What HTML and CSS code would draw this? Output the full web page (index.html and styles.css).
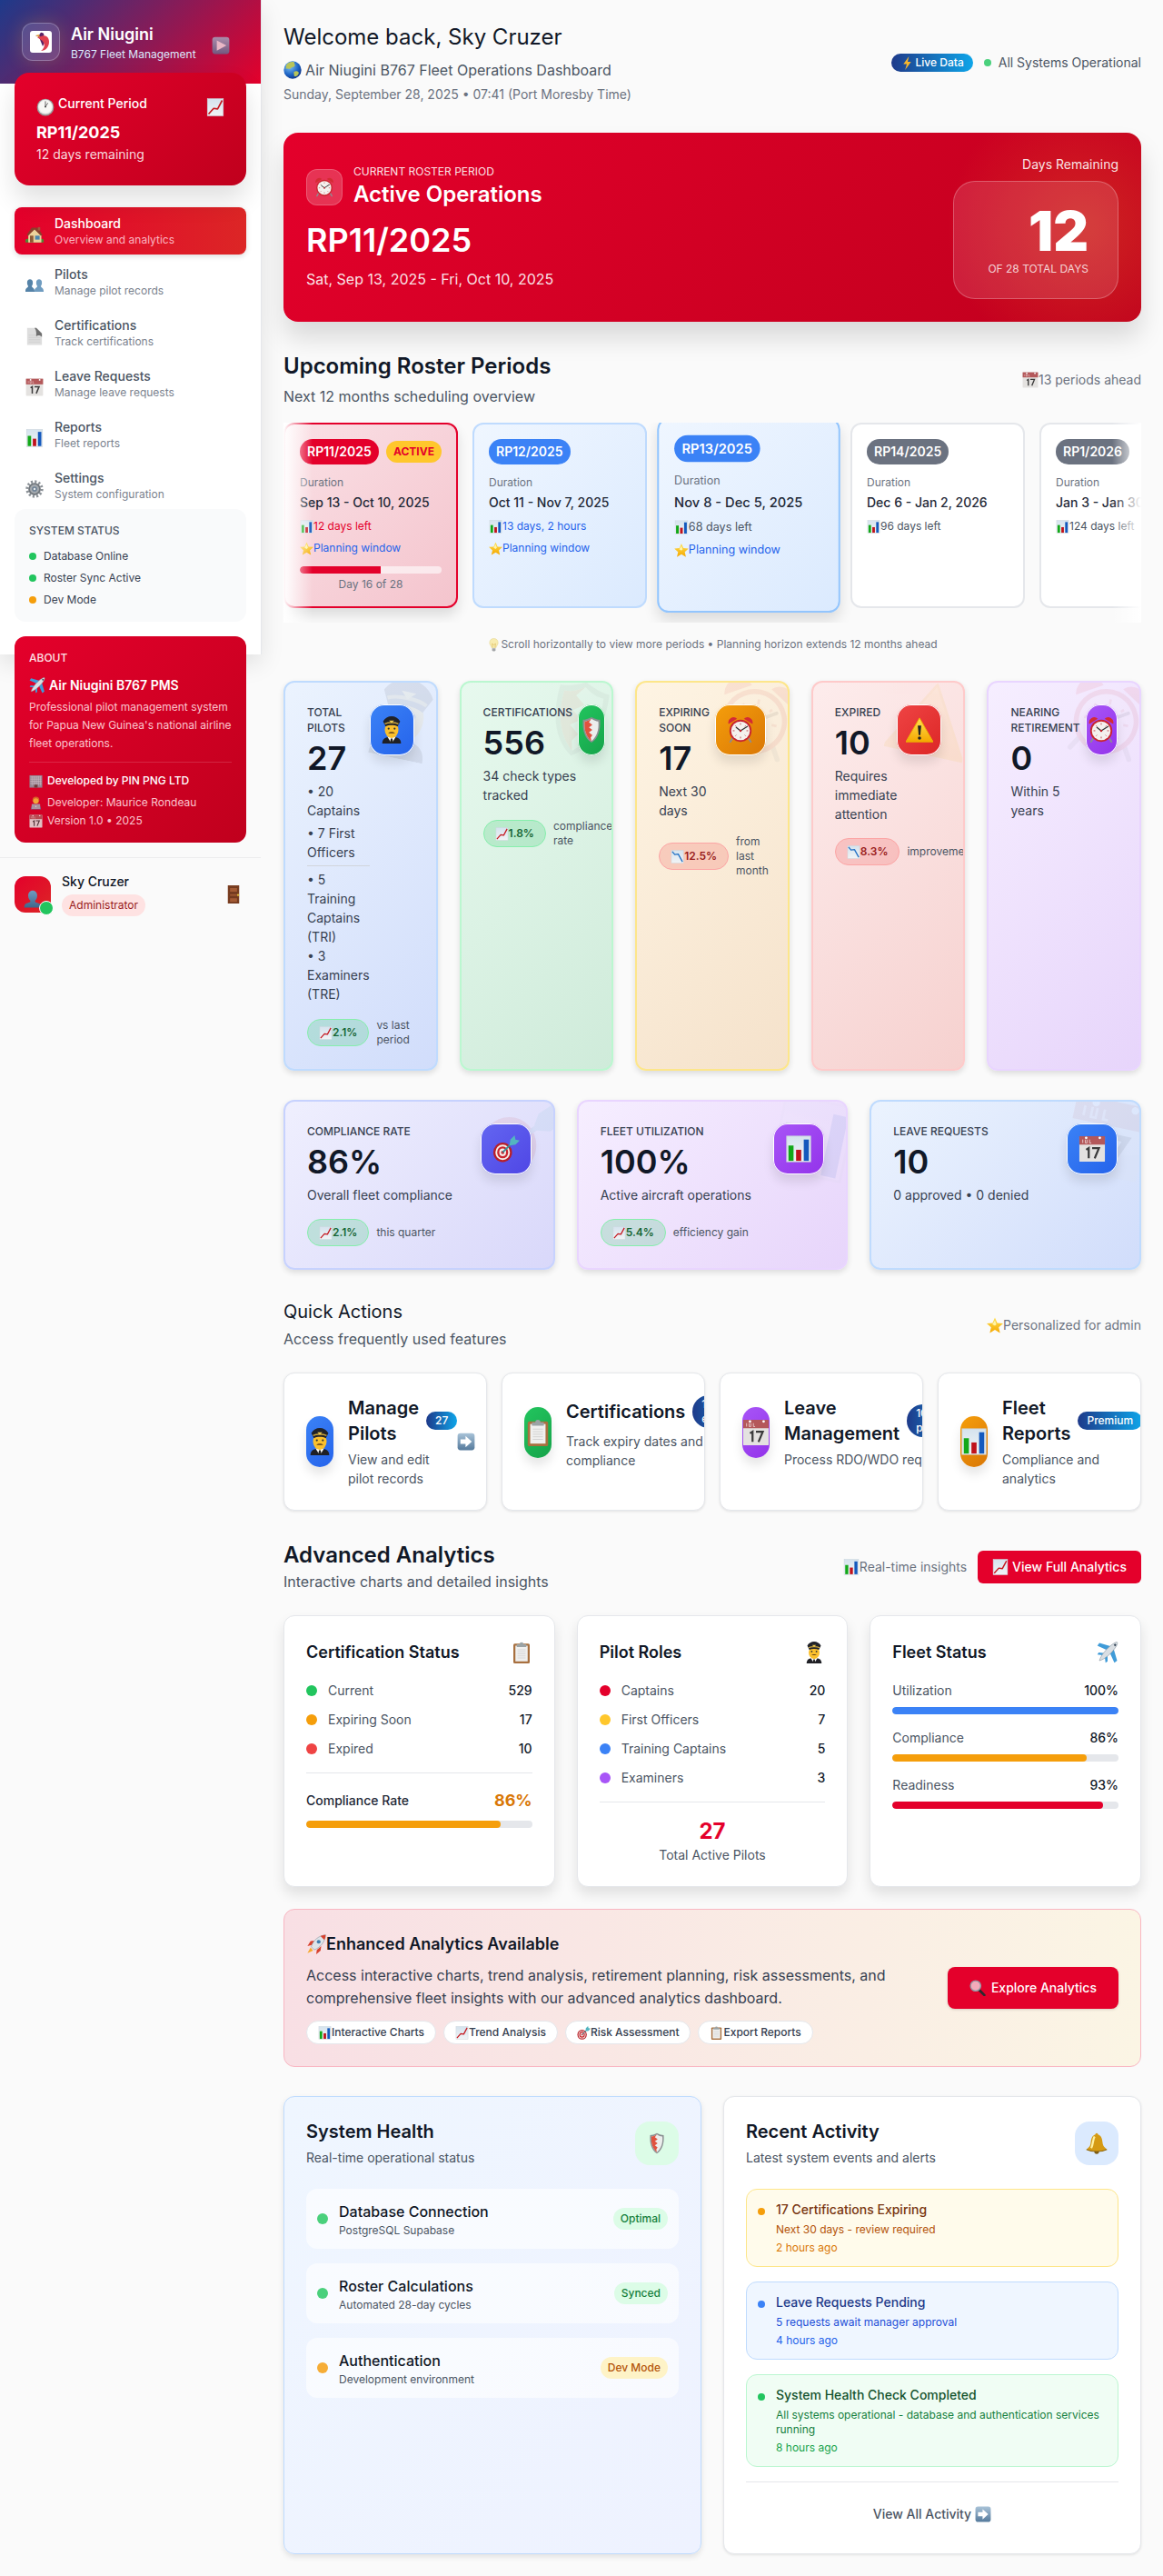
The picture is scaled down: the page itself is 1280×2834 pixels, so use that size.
FILE: index.html
```html
<!DOCTYPE html>
<html lang="en">
<head>
<meta charset="utf-8">
<meta name="viewport" content="width=device-width, initial-scale=1">
<title>Air Niugini B767 Fleet Management</title>
<link rel="stylesheet" href="styles.css">
</head>
<body>
<svg class="sprite" aria-hidden="true">
  <defs>
    <linearGradient id="g-steel" x1="0" y1="0" x2="0" y2="1"><stop offset="0" stop-color="#a9c3d8"/><stop offset="1" stop-color="#557a9c"/></linearGradient>
    <linearGradient id="g-person" x1="0" y1="0" x2="0" y2="1"><stop offset="0" stop-color="#6f9cc0"/><stop offset="1" stop-color="#3f678c"/></linearGradient>
    <linearGradient id="g-paper" x1="0" y1="0" x2="0" y2="1"><stop offset="0" stop-color="#d5e3ee"/><stop offset="1" stop-color="#f1f4f6"/></linearGradient>
    <linearGradient id="g-gold" x1="0" y1="0" x2="0" y2="1"><stop offset="0" stop-color="#ffe052"/><stop offset="1" stop-color="#f5a800"/></linearGradient>
    <radialGradient id="g-globe" cx=".35" cy=".3" r=".8"><stop offset="0" stop-color="#7fc4f5"/><stop offset=".6" stop-color="#1c62c4"/><stop offset="1" stop-color="#0b2a78"/></radialGradient>
  </defs>
  <symbol id="i-clock" viewBox="0 0 32 32"><circle cx="16" cy="16" r="15" fill="#9a9a9a"/><circle cx="16" cy="15.500" r="13" fill="#e9e9e7"/><circle cx="16" cy="15" r="11" fill="#f8f8f5"/><path d="M16 15V6M16 15l4-6" stroke="#666" stroke-width="1.600" stroke-linecap="round"/><circle cx="16" cy="15" r="1.500" fill="#444"/></symbol>
  <symbol id="i-alarm" viewBox="0 0 32 32"><path d="M7 25l-3 5M25 25l3 5" stroke="#8c8c94" stroke-width="2" stroke-linecap="round"/><path d="M2 9a6 6 0 0 1 10-6zM30 9a6 6 0 0 0-10-6z" fill="#d42b34"/><circle cx="16" cy="17" r="13" fill="#c8252f"/><circle cx="16" cy="17" r="11" fill="#f4f1ee"/><path d="M16 8v2M16 24v2M7 17h2M23 17h2M10 11l1 1M22 11l-1 1M10 23l1-1M22 23l-1-1" stroke="#c24a50" stroke-width="1"/><path d="M16 17l8-5M16 17l-5-4" stroke="#333" stroke-width="1.400" stroke-linecap="round"/><circle cx="16" cy="17" r="1.300" fill="#c8252f"/></symbol>
  <symbol id="i-play" viewBox="0 0 32 32"><rect x="1" y="1" width="30" height="30" rx="5" fill="url(#g-steel)"/><path d="M9 7l17 9-17 9z" fill="#fff"/></symbol>
  <symbol id="i-arrow" viewBox="0 0 32 32"><rect x="1" y="1" width="30" height="30" rx="5" fill="url(#g-steel)"/><path d="M6 12h9V6l11 10-11 10v-6H6z" fill="#fff"/></symbol>
  <symbol id="i-up" viewBox="0 0 32 32"><rect x="2" y="1" width="28" height="30" fill="url(#g-paper)" stroke="#cbd5dc"/><path d="M4 28l9-10 7 1 8-15" fill="none" stroke="#c5161d" stroke-width="2.600" stroke-linejoin="round"/></symbol>
  <symbol id="i-down" viewBox="0 0 32 32"><rect x="2" y="1" width="28" height="30" fill="url(#g-paper)" stroke="#cbd5dc"/><path d="M4 4l6 7 8-1 10 18" fill="none" stroke="#2270c4" stroke-width="2.800" stroke-linejoin="round"/></symbol>
  <symbol id="i-bars" viewBox="0 0 32 32"><rect x="2" y="1" width="28" height="30" fill="url(#g-paper)" stroke="#cbd5dc"/><rect x="4" y="12" width="6" height="18" fill="#12a818"/><rect x="13" y="17" width="6" height="13" fill="#c0121c"/><rect x="22" y="5" width="6" height="25" fill="#1459bd"/></symbol>
  <symbol id="i-cal" viewBox="0 0 32 32"><rect x="1" y="1" width="30" height="30" rx="1" fill="#e4e2e0"/><path d="M1 1h30v10H1z" fill="#b4585a"/><path d="M5 9V5M8 5v4h2V5M13 5v4h2" stroke="#e8c8c8" fill="none"/><circle cx="9" cy="3" r="1.500" fill="#fff"/><circle cx="25" cy="3" r="1.500" fill="#fff"/><path d="M9 17l3-2v12M16 15h8l-5 12" stroke="#3b3b3b" stroke-width="2.400" fill="none"/></symbol>
  <symbol id="i-house" viewBox="0 0 32 32"><path d="M0 25c3-3 29-3 32 0v5H0z" fill="#4d8a35"/><path d="M5 15L16 5l12 10v15H5z" fill="#ecd39b"/><path d="M2 17L11 4h11l8 13-3 1-11-11L5 18z" fill="#8a3f2c"/><rect x="8" y="18" width="6" height="12" fill="#8d5a35"/><rect x="17" y="18" width="8" height="7" fill="#4b86ad"/><rect x="22" y="3" width="4" height="6" fill="#a2563e"/></symbol>
  <symbol id="i-people" viewBox="0 0 32 32"><path d="M24 5c3 0 5 2 5 6 0 3-1 5-2 6 0 3 5 2 5 9v1H16v-1c0-7 5-6 5-9-1-1-2-3-2-6 0-4 2-6 5-6z" fill="#6f9cc0"/><path d="M8 5c3 0 5 2 5 6 0 3-1 5-2 6 0 3 5 2 5 9v1H0v-1c0-7 5-6 5-9-1-1-2-3-2-6 0-4 2-6 5-6z" fill="#5583a8"/></symbol>
  <symbol id="i-page" viewBox="0 0 32 32"><path d="M3 1h17l9 9v21H3z" fill="#dedede"/><path d="M6 14h16M6 18h20M6 22h20M6 26h20" stroke="#cacaca"/><path d="M19 1l10 10v6c-3-4-8-3-10-1 0-5 1-10-3-15z" fill="#6f6f6f"/></symbol>
  <symbol id="i-gear" viewBox="0 0 32 32"><circle cx="16" cy="16" r="13" fill="none" stroke="#8b9197" stroke-width="5" stroke-dasharray="3.400 3.400"/><circle cx="16" cy="16" r="9.500" fill="#a6abb0" stroke="#70767c" stroke-width="3"/><circle cx="16" cy="16" r="4.500" fill="#6c8094"/><circle cx="16" cy="16" r="2" fill="#e4e7ea"/></symbol>
  <symbol id="i-plane" viewBox="0 0 32 32"><path d="M14 12L1 6l3-4 17 5zM20 18l6 13 4-3-5-17z" fill="#3f9bd8"/><path d="M9 20l-8-1 2-3 9 1zM12 23l1 8 3-2 0-9z" fill="#3f9bd8"/><path d="M4 28c2-8 11-18 19-24 3-2 6-4 7-3s0 4-2 7C22 17 12 26 4 28z" fill="#d9dee3" stroke="#8794a0" stroke-width=".8"/><path d="M27 3l2 2-2 2-2-2z" fill="#345"/></symbol>
  <symbol id="i-building" viewBox="0 0 32 32"><rect x="1" y="2" width="30" height="29" fill="#8d9da6"/><path d="M3 6h26M3 11h26M3 16h26M3 21h26M7 4v22M12 4v22M17 4v22M22 4v22M27 4v22" stroke="#c8d6dc" stroke-width="1.500"/><rect x="12" y="24" width="8" height="7" fill="#5a4540"/></symbol>
  <symbol id="i-dev" viewBox="0 0 32 32"><circle cx="16" cy="9" r="8" fill="#d8722a"/><circle cx="16" cy="11" r="6" fill="#f9c23c"/><path d="M4 31c0-9 5-12 12-12s12 3 12 12z" fill="#6a6f9a"/><rect x="6" y="18" width="20" height="12" rx="1" fill="#a5abb3"/><circle cx="16" cy="24" r="1.500" fill="#e7eaee"/></symbol>
  <symbol id="i-bust" viewBox="0 0 32 32"><path d="M16 1c5 0 8 4 8 9s-2 7-4 9c0 3 2 3 5 4 4 1 6 3 6 8H1c0-5 2-7 6-8 3-1 5-1 5-4-2-2-4-4-4-9s3-9 8-9z" fill="url(#g-person)"/></symbol>
  <symbol id="i-door" viewBox="0 0 32 32"><rect x="6" y="0" width="20" height="32" fill="#7b3f22"/><path d="M9 4h14v8H9zM9 15h14v4H9zM9 22h14v8H9z" fill="#a35a34" stroke="#62301a"/><circle cx="24" cy="17" r="1.800" fill="#e7c33c"/></symbol>
  <symbol id="i-globe" viewBox="0 0 32 32"><circle cx="16" cy="16" r="15.500" fill="url(#g-globe)"/><path d="M5 7c4-5 9-6 14-5-1 3 3 5 0 8-3 2-4 0-6 3-3 2-7 0-9 1zM18 20c3-3 8-2 9 1-1 5-6 7-8 6z" fill="#b8c45a"/></symbol>
  <symbol id="i-zap" viewBox="0 0 32 32"><path d="M20 0L7 18h8L11 32l14-19h-8z" fill="#f7b52c"/></symbol>
  <symbol id="i-star" viewBox="0 0 32 32"><path d="M16 1l4.500 10.500L32 12.500l-8.500 7.500L26 31l-10-6-10 6 2.500-11L0 12.500l11.500-1z" fill="url(#g-gold)"/><path d="M16 6l3 8-3 3-5-3z" fill="#fff4a8"/></symbol>
  <symbol id="i-bulb" viewBox="0 0 32 32"><path d="M16 1c6 0 10 4 10 10 0 5-4 7-5 12H11c-1-5-5-7-5-12C6 5 10 1 16 1z" fill="#f8ecb0" stroke="#e2cf82"/><path d="M13 22l-1-9 4 3 4-3-1 9" fill="none" stroke="#d3a73a"/><path d="M12 24h8v5l-2 2h-4l-2-2z" fill="#a3a6a8"/></symbol>
  <symbol id="i-pilot" viewBox="0 0 32 32"><path d="M5 32c0-6 4-8 11-8s11 2 11 8z" fill="#1f2026"/><path d="M11 24h10l-5 8z" fill="#fff"/><path d="M15 26h2l1 6h-4z" fill="#222"/><ellipse cx="16" cy="16" rx="8" ry="9.500" fill="#fbc02d"/><path d="M12 20c2-2 6-2 8 0z" fill="#5b3a1a"/><circle cx="12.500" cy="14.500" r="1.200" fill="#333"/><circle cx="19.500" cy="14.500" r="1.200" fill="#333"/><path d="M6 6c2-4 6-6 10-6s8 2 10 6l-3 6c-4-2-10-2-14 0z" fill="#202229"/><path d="M8 9c4-2 12-2 16 0" stroke="#c9a43a" stroke-width="1.500" fill="none"/><path d="M13 5h6l-3 3z" fill="#f0cb52"/></symbol>
  <symbol id="i-shield" viewBox="0 0 32 32"><path d="M16 1c4 2 7 3 10 3 1 12-2 22-10 27C8 26 5 16 6 4c3 0 6-1 10-3z" fill="#8b9092"/><path d="M16 3c3 2 5 3 8 3 1 10-2 18-8 23C10 24 7 16 8 6c3 0 5-1 8-3z" fill="#eceeed"/><path d="M16 3l-3 4 4 3-4 3 4 3-4 3 4 3-2 3 1 4C10 24 7 16 8 6c3 0 5-1 8-3z" fill="#e0523f"/></symbol>
  <symbol id="i-warn" viewBox="0 0 32 32"><path d="M16 2l16 28H0z" fill="url(#g-gold)" stroke="#eeb400" stroke-linejoin="round"/><path d="M14 11h4l-1 11h-2z" fill="#222"/><circle cx="16" cy="25.500" r="1.900" fill="#222"/></symbol>
  <symbol id="i-dart" viewBox="0 0 32 32"><ellipse cx="12" cy="20" rx="11" ry="11.500" fill="#b81f28"/><ellipse cx="12" cy="20" rx="8.500" ry="9" fill="#f4eeea"/><ellipse cx="12" cy="20" rx="6.500" ry="7" fill="#c9252e"/><ellipse cx="12" cy="20" rx="4" ry="4.500" fill="#f4eeea"/><circle cx="12" cy="20" r="2" fill="#c9252e"/><path d="M12 20L26 6" stroke="#3c8f98" stroke-width="2"/><path d="M20 12l1-7 5-5 1 5 5 1-5 5z" fill="#53b5c0"/></symbol>
  <symbol id="i-clip" viewBox="0 0 32 32"><rect x="4" y="3" width="24" height="29" rx="2" fill="#a8703f"/><rect x="7" y="6" width="18" height="23" fill="#f0f0ef"/><path d="M10 12h12M10 15h12M10 18h12M10 21h12M10 24h12" stroke="#d0d0d0"/><path d="M9 4h4a3 3 0 0 1 6 0h4v4H9z" fill="#9ba3a5"/></symbol>
  <symbol id="i-rocket" viewBox="0 0 32 32"><path d="M9 17l-7 2 5-8 6-1zM17 25l-1 7 7-6 1-7z" fill="#d9412e"/><path d="M7 21l-5 9 9-4z" fill="#f7a92e"/><path d="M8 20C11 10 20 2 31 1c0 10-8 20-18 24z" fill="#dfe4e8" stroke="#7f8b96" stroke-width=".8"/><path d="M31 1c0 3-1 6-2 8l-6-6c2-1 5-2 8-2z" fill="#d9412e"/><circle cx="20" cy="12" r="3" fill="#3f7eae"/></symbol>
  <symbol id="i-mag" viewBox="0 0 32 32"><path d="M19 20l10 10" stroke="#2a2a2e" stroke-width="5" stroke-linecap="round"/><circle cx="12" cy="12" r="10" fill="#f3a9b9" stroke="#8f9aa5" stroke-width="2.500"/></symbol>
  <symbol id="i-bell" viewBox="0 0 32 32"><circle cx="16" cy="28" r="3.500" fill="#7b5a14"/><path d="M14 3a2 2 0 0 1 4 0c6 2 6 8 7 14 1 4 3 5 6 8-8 4-22 4-30 0 3-3 5-4 6-8 1-6 1-12 7-14z" fill="#d59a14"/><path d="M13 6c-3 4-2 12-5 17" stroke="#fff1a0" stroke-width="3" fill="none"/><path d="M1 25c8 4 22 4 30 0" stroke="#8f6810" stroke-width="1.500" fill="none"/></symbol>
</svg>

<div class="app">
  <aside class="sidebar">
    <header class="brand">
      <div class="brand-logo">
        <svg viewBox="0 0 24 24" width="24" height="24" aria-hidden="true"><rect width="24" height="24" rx="3" fill="#fff"/><path d="M6 5l4 0c1-2 2-4 3-3 2 0 3 2 2 4l2 3c-1 2-1 5-3 8l-2-5c-1-3-2-6-6-7z" fill="#5a2166"/><path d="M12 6c5-2 9 1 9 6 0 6-4 10-9 10 3-2 5-6 3-9-1-3-5-4-7-6z" fill="#df3f4f"/><path d="M6 5l4-1 1 3z" fill="#e8a33a"/></svg>
      </div>
      <div class="brand-text">
        <h2>Air Niugini</h2>
        <p>B767 Fleet Management</p>
      </div>
      <button class="brand-toggle" aria-label="Collapse sidebar"><svg class="e20"><use href="#i-play"/></svg></button>
    </header>

    <section class="period">
      <div class="period-head"><svg class="e20"><use href="#i-clock"/></svg><span>Current Period</span><svg class="e20 last"><use href="#i-up"/></svg></div>
      <strong>RP11/2025</strong>
      <p>12 days remaining</p>
    </section>

    <nav class="nav">
      <a class="active" href="#"><svg class="e20"><use href="#i-house"/></svg><span><b>Dashboard</b><small>Overview and analytics</small></span></a>
      <a href="#"><svg class="e20"><use href="#i-people"/></svg><span><b>Pilots</b><small>Manage pilot records</small></span></a>
      <a href="#"><svg class="e20"><use href="#i-page"/></svg><span><b>Certifications</b><small>Track certifications</small></span></a>
      <a href="#"><svg class="e20"><use href="#i-cal"/></svg><span><b>Leave Requests</b><small>Manage leave requests</small></span></a>
      <a href="#"><svg class="e20"><use href="#i-bars"/></svg><span><b>Reports</b><small>Fleet reports</small></span></a>
      <a href="#"><svg class="e20"><use href="#i-gear"/></svg><span><b>Settings</b><small>System configuration</small></span></a>
    </nav>

    <section class="status">
      <h3>SYSTEM STATUS</h3>
      <ul>
        <li><i class="dot green"></i>Database Online</li>
        <li><i class="dot green"></i>Roster Sync Active</li>
        <li><i class="dot amber"></i>Dev Mode</li>
      </ul>
    </section>

    <section class="about">
      <h3>ABOUT</h3>
      <h4><svg class="e18"><use href="#i-plane"/></svg>Air Niugini B767 PMS</h4>
      <p>Professional pilot management system for Papua New Guinea's national airline fleet operations.</p>
      <div class="credits">
        <span class="strong"><svg class="e15"><use href="#i-building"/></svg>Developed by PIN PNG LTD</span>
        <span><svg class="e15"><use href="#i-dev"/></svg>Developer: Maurice Rondeau</span>
        <span><svg class="e15"><use href="#i-cal"/></svg>Version 1.0 • 2025</span>
      </div>
    </section>

    <footer class="user">
      <div class="avatar"><svg class="e20"><use href="#i-bust"/></svg></div>
      <div class="user-text"><b>Sky Cruzer</b><span>Administrator</span></div>
      <button aria-label="Sign out"><svg class="e20"><use href="#i-door"/></svg></button>
    </footer>
  </aside>

  <main class="main">
    <header class="welcome">
      <div>
        <h1>Welcome back, Sky Cruzer</h1>
        <p class="lead"><svg class="e20"><use href="#i-globe"/></svg>Air Niugini B767 Fleet Operations Dashboard</p>
        <p class="date">Sunday, September 28, 2025 • 07:41 (Port Moresby Time)</p>
      </div>
      <div class="live">
        <span class="badge"><svg class="e15"><use href="#i-zap"/></svg>Live Data</span>
        <span class="ok"><i class="dot pulse"></i>All Systems Operational</span>
      </div>
    </header>

    <section class="hero">
      <div>
        <div class="hero-top">
          <div class="hero-icon"><svg class="e22"><use href="#i-alarm"/></svg></div>
          <div><p class="hero-label">CURRENT ROSTER PERIOD</p><h2>Active Operations</h2></div>
        </div>
        <p class="hero-code">RP11/2025</p>
        <p class="hero-dates">Sat, Sep 13, 2025 - Fri, Oct 10, 2025</p>
      </div>
      <div class="hero-right">
        <p>Days Remaining</p>
        <div class="count"><strong>12</strong><span>OF 28 TOTAL DAYS</span></div>
      </div>
    </section>

    <section class="block">
      <div class="head roster-head">
        <div><h2>Upcoming Roster Periods</h2><p>Next 12 months scheduling overview</p></div>
        <span class="note"><svg class="e18"><use href="#i-cal"/></svg>13 periods ahead</span>
      </div>
      <div class="roster-wrap">
        <div class="roster">
          <article class="rp current">
            <div class="rp-top"><span class="code">RP11/2025</span><span class="tag">ACTIVE</span></div>
            <p class="dur">Duration</p><p class="range">Sep 13 - Oct 10, 2025</p>
            <p class="left red"><svg class="e15"><use href="#i-bars"/></svg>12 days left</p>
            <p class="left blue"><svg class="e15"><use href="#i-star"/></svg>Planning window</p>
            <div class="bar thin"><i style="width:57%"></i></div>
            <p class="day">Day 16 of 28</p>
          </article>
          <article class="rp plan">
            <div class="rp-top"><span class="code">RP12/2025</span></div>
            <p class="dur">Duration</p><p class="range">Oct 11 - Nov 7, 2025</p>
            <p class="left blue"><svg class="e15"><use href="#i-bars"/></svg>13 days, 2 hours</p>
            <p class="left blue"><svg class="e15"><use href="#i-star"/></svg>Planning window</p>
          </article>
          <article class="rp plan featured">
            <div class="rp-top"><span class="code">RP13/2025</span></div>
            <p class="dur">Duration</p><p class="range">Nov 8 - Dec 5, 2025</p>
            <p class="left"><svg class="e15"><use href="#i-bars"/></svg>68 days left</p>
            <p class="left blue"><svg class="e15"><use href="#i-star"/></svg>Planning window</p>
          </article>
          <article class="rp">
            <div class="rp-top"><span class="code">RP14/2025</span></div>
            <p class="dur">Duration</p><p class="range">Dec 6 - Jan 2, 2026</p>
            <p class="left"><svg class="e15"><use href="#i-bars"/></svg>96 days left</p>
          </article>
          <article class="rp">
            <div class="rp-top"><span class="code">RP1/2026</span></div>
            <p class="dur">Duration</p><p class="range">Jan 3 - Jan 30, 2026</p>
            <p class="left"><svg class="e15"><use href="#i-bars"/></svg>124 days left</p>
          </article>
        </div>
      </div>
      <p class="hint"><svg class="e15"><use href="#i-bulb"/></svg>Scroll horizontally to view more periods • Planning horizon extends 12 months ahead</p>
    </section>

    <section class="stats five">
      <article class="stat blue">
        <svg class="mark"><use href="#i-pilot"/></svg>
        <div class="stat-top">
          <div class="stat-text"><h3>TOTAL PILOTS</h3><strong>27</strong>
            <p>• 20 Captains</p><p class="next">• 7 First Officers</p>
            <div class="split"><p>• 5 Training Captains (TRI)</p><p>• 3 Examiners (TRE)</p></div></div>
          <div class="stat-icon"><svg class="e30"><use href="#i-pilot"/></svg></div>
        </div>
        <div class="trend"><span class="pill up"><svg class="e15"><use href="#i-up"/></svg>2.1%</span><span>vs last period</span></div>
      </article>
      <article class="stat green">
        <svg class="mark"><use href="#i-shield"/></svg>
        <div class="stat-top">
          <div class="stat-text"><h3>CERTIFICATIONS</h3><strong>556</strong><p>34 check types tracked</p></div>
          <div class="stat-icon"><svg class="e30"><use href="#i-shield"/></svg></div>
        </div>
        <div class="trend"><span class="pill up"><svg class="e15"><use href="#i-up"/></svg>1.8%</span><span>compliance rate</span></div>
      </article>
      <article class="stat yellow">
        <svg class="mark"><use href="#i-alarm"/></svg>
        <div class="stat-top">
          <div class="stat-text"><h3>EXPIRING SOON</h3><strong>17</strong><p>Next 30 days</p></div>
          <div class="stat-icon"><svg class="e30"><use href="#i-alarm"/></svg></div>
        </div>
        <div class="trend"><span class="pill down"><svg class="e15"><use href="#i-down"/></svg>12.5%</span><span>from last month</span></div>
      </article>
      <article class="stat red">
        <svg class="mark"><use href="#i-warn"/></svg>
        <div class="stat-top">
          <div class="stat-text"><h3>EXPIRED</h3><strong>10</strong><p>Requires immediate attention</p></div>
          <div class="stat-icon"><svg class="e30"><use href="#i-warn"/></svg></div>
        </div>
        <div class="trend"><span class="pill down"><svg class="e15"><use href="#i-down"/></svg>8.3%</span><span>improvement</span></div>
      </article>
      <article class="stat purple">
        <svg class="mark"><use href="#i-alarm"/></svg>
        <div class="stat-top">
          <div class="stat-text"><h3>NEARING RETIREMENT</h3><strong>0</strong><p>Within 5 years</p></div>
          <div class="stat-icon"><svg class="e30"><use href="#i-alarm"/></svg></div>
        </div>
      </article>
    </section>

    <section class="stats three">
      <article class="stat indigo">
        <svg class="mark"><use href="#i-dart"/></svg>
        <div class="stat-top">
          <div class="stat-text"><h3>COMPLIANCE RATE</h3><strong>86%</strong><p>Overall fleet compliance</p></div>
          <div class="stat-icon"><svg class="e30"><use href="#i-dart"/></svg></div>
        </div>
        <div class="trend"><span class="pill up"><svg class="e15"><use href="#i-up"/></svg>2.1%</span><span>this quarter</span></div>
      </article>
      <article class="stat purple">
        <svg class="mark"><use href="#i-bars"/></svg>
        <div class="stat-top">
          <div class="stat-text"><h3>FLEET UTILIZATION</h3><strong>100%</strong><p>Active aircraft operations</p></div>
          <div class="stat-icon"><svg class="e30"><use href="#i-bars"/></svg></div>
        </div>
        <div class="trend"><span class="pill up"><svg class="e15"><use href="#i-up"/></svg>5.4%</span><span>efficiency gain</span></div>
      </article>
      <article class="stat blue">
        <svg class="mark"><use href="#i-cal"/></svg>
        <div class="stat-top">
          <div class="stat-text"><h3>LEAVE REQUESTS</h3><strong>10</strong><p>0 approved • 0 denied</p></div>
          <div class="stat-icon"><svg class="e30"><use href="#i-cal"/></svg></div>
        </div>
      </article>
    </section>

    <section class="block">
      <div class="head quick-head">
        <div><h2>Quick Actions</h2><p>Access frequently used features</p></div>
        <span class="note"><svg class="e18"><use href="#i-star"/></svg>Personalized for admin</span>
      </div>
      <div class="quick">
        <a class="card action blue" href="#"><div class="row"><span class="tile"><svg class="e30"><use href="#i-pilot"/></svg></span>
          <span class="action-text"><span class="action-title"><b>Manage Pilots</b><span class="badge">27</span></span><span class="desc">View and edit pilot records</span></span><svg class="e20"><use href="#i-arrow"/></svg></div></a>
        <a class="card action green" href="#"><div class="row"><span class="tile"><svg class="e30"><use href="#i-clip"/></svg></span>
          <span class="action-text"><span class="action-title"><b>Certifications</b><span class="badge">17 expiring</span></span><span class="desc">Track expiry dates and compliance</span></span><svg class="e20"><use href="#i-arrow"/></svg></div></a>
        <a class="card action purple" href="#"><div class="row"><span class="tile"><svg class="e30"><use href="#i-cal"/></svg></span>
          <span class="action-text"><span class="action-title"><b>Leave Management</b><span class="badge">10 pending</span></span><span class="desc">Process RDO/WDO requests</span></span><svg class="e20"><use href="#i-arrow"/></svg></div></a>
        <a class="card action yellow" href="#"><div class="row"><span class="tile"><svg class="e30"><use href="#i-bars"/></svg></span>
          <span class="action-text"><span class="action-title"><b>Fleet Reports</b><span class="badge">Premium</span></span><span class="desc">Compliance and analytics</span></span><svg class="e20"><use href="#i-arrow"/></svg></div></a>
      </div>
    </section>

    <section class="block">
      <div class="head analytics-head">
        <div><h2>Advanced Analytics</h2><p>Interactive charts and detailed insights</p></div>
        <div class="head-side"><span class="note"><svg class="e18"><use href="#i-bars"/></svg>Real-time insights</span>
          <button class="btn"><svg class="e18"><use href="#i-up"/></svg>View Full Analytics</button></div>
      </div>
      <div class="analytics">
        <article class="card panel">
          <div class="panel-head"><h3>Certification Status</h3><svg class="e24"><use href="#i-clip"/></svg></div>
          <ul class="legend">
            <li><i class="dot big green"></i>Current<b>529</b></li>
            <li><i class="dot big amber"></i>Expiring Soon<b>17</b></li>
            <li><i class="dot big red"></i>Expired<b>10</b></li>
          </ul>
          <div class="foot"><div class="rate"><span>Compliance Rate</span><b>86%</b></div><div class="bar amber"><i style="width:86%"></i></div></div>
        </article>
        <article class="card panel">
          <div class="panel-head"><h3>Pilot Roles</h3><svg class="e24"><use href="#i-pilot"/></svg></div>
          <ul class="legend">
            <li><i class="dot big brand-red"></i>Captains<b>20</b></li>
            <li><i class="dot big gold"></i>First Officers<b>7</b></li>
            <li><i class="dot big blue"></i>Training Captains<b>5</b></li>
            <li><i class="dot big purple"></i>Examiners<b>3</b></li>
          </ul>
          <div class="foot total"><b>27</b><span>Total Active Pilots</span></div>
        </article>
        <article class="card panel">
          <div class="panel-head"><h3>Fleet Status</h3><svg class="e24"><use href="#i-plane"/></svg></div>
          <div class="meters">
            <div><p>Utilization<b>100%</b></p><div class="bar blue"><i style="width:100%"></i></div></div>
            <div><p>Compliance<b>86%</b></p><div class="bar amber"><i style="width:86%"></i></div></div>
            <div><p>Readiness<b>93%</b></p><div class="bar"><i style="width:93%"></i></div></div>
          </div>
        </article>
      </div>
      <div class="promo">
        <div>
          <h3><svg class="e22"><use href="#i-rocket"/></svg>Enhanced Analytics Available</h3>
          <p>Access interactive charts, trend analysis, retirement planning, risk assessments, and comprehensive fleet insights with our advanced analytics dashboard.</p>
          <div class="chips">
            <span><svg class="e15"><use href="#i-bars"/></svg>Interactive Charts</span>
            <span><svg class="e15"><use href="#i-up"/></svg>Trend Analysis</span>
            <span><svg class="e15"><use href="#i-dart"/></svg>Risk Assessment</span>
            <span><svg class="e15"><use href="#i-clip"/></svg>Export Reports</span>
          </div>
        </div>
        <button class="btn large"><svg class="e18"><use href="#i-mag"/></svg>Explore Analytics</button>
      </div>
    </section>

    <section class="bottom">
      <article class="card health">
        <div class="sec-head"><div><h3>System Health</h3><p>Real-time operational status</p></div><div class="sec-icon green"><svg class="e24"><use href="#i-shield"/></svg></div></div>
        <ul class="checks">
          <li><i class="dot big pulse"></i><div><b>Database Connection</b><small>PostgreSQL Supabase</small></div><span class="state">Optimal</span></li>
          <li><i class="dot big pulse"></i><div><b>Roster Calculations</b><small>Automated 28-day cycles</small></div><span class="state">Synced</span></li>
          <li><i class="dot big pulse-amber"></i><div><b>Authentication</b><small>Development environment</small></div><span class="state dev">Dev Mode</span></li>
        </ul>
      </article>
      <article class="card activity">
        <div class="sec-head"><div><h3>Recent Activity</h3><p>Latest system events and alerts</p></div><div class="sec-icon blue"><svg class="e24"><use href="#i-bell"/></svg></div></div>
        <ul class="events">
          <li class="warn"><i class="dot amber"></i><div><b>17 Certifications Expiring</b><p>Next 30 days - review required</p><time>2 hours ago</time></div></li>
          <li class="info"><i class="dot blue"></i><div><b>Leave Requests Pending</b><p>5 requests await manager approval</p><time>4 hours ago</time></div></li>
          <li class="good"><i class="dot green"></i><div><b>System Health Check Completed</b><p>All systems operational - database and authentication services running</p><time>8 hours ago</time></div></li>
        </ul>
        <div class="more"><button>View All Activity<svg class="e18"><use href="#i-arrow"/></svg></button></div>
      </article>
    </section>
  </main>
</div>
</body>
</html>
```
FILE: styles.css
```css
* { box-sizing: border-box; margin: 0; padding: 0; }
body { font-family: Inter, "Liberation Sans", sans-serif; font-size: 14px; line-height: 20px; color: #111827; background: #fafafa; }
ul { list-style: none; }
a { color: inherit; text-decoration: none; }
button { font: inherit; color: inherit; background: none; border: 0; cursor: pointer; }
b, h1, h2, h3, h4 { font-weight: 500; }
.sprite { position: absolute; width: 0; height: 0; }
.e15, .e18, .e20, .e22, .e24, .e30 { display: block; flex: none; }
.e15 { width: 15px; height: 15px; }
.e18 { width: 18px; height: 18px; }
.e20 { width: 20px; height: 20px; }
.e22 { width: 22px; height: 22px; }
.e24 { width: 24px; height: 24px; }
.e30 { width: 30px; height: 30px; }

.dot { display: block; flex: none; width: 8px; height: 8px; border-radius: 50%; }
.dot.big { width: 12px; height: 12px; }
.dot.green { background: #22c55e; }
.dot.amber { background: #f59e0b; }
.dot.red { background: #ef4444; }
.dot.brand-red { background: #e4002b; }
.dot.gold { background: #ffc72c; }
.dot.blue { background: #3b82f6; }
.dot.purple { background: #a855f7; }
.dot.pulse { background: #4ad07c; }
.dot.pulse-amber { background: #f6ad37; }

.app { display: flex; align-items: flex-start; }

/* Sidebar */
.sidebar { flex: none; width: 288px; height: 720px; background: #fff; border-right: 1px solid #e5e7eb; box-shadow: 0 10px 24px rgba(0, 0, 0, .1); }
.brand { display: flex; align-items: center; padding: 24px; gap: 12px; background: linear-gradient(135deg, #1e3a8a, #e4002b); color: #fff; }
.brand-logo { display: grid; place-items: center; width: 42px; height: 42px; border-radius: 12px; background: rgba(255, 255, 255, .15); border: 1px solid rgba(255, 255, 255, .25); box-shadow: 0 0 20px rgba(255, 199, 44, .2); }
.brand-text { flex: 1; white-space: nowrap; }
.brand-text h2 { font-size: 18px; line-height: 28px; font-weight: 600; }
.brand-text p { font-size: 12px; line-height: 16px; color: #dbeafe; }
.brand-toggle { padding: 12px 10px 4px 0; opacity: .7; }
.period { position: relative; margin: -12px 16px 24px; padding: 24px; border-radius: 16px; color: #fff; background: linear-gradient(135deg, #e4002b, #c0001d); box-shadow: 0 16px 28px rgba(0, 0, 0, .12); }
.period-head { display: flex; height: 20px; margin-bottom: 8px; gap: 4px; font-weight: 500; }
.period-head svg { margin-top: 4px; }
.period-head .last { margin-left: auto; }
.period strong { display: block; font-size: 18px; line-height: 28px; font-weight: 700; }
.period p { color: rgba(255, 255, 255, .85); }
.nav { display: flex; flex-direction: column; gap: 4px; margin: 0 16px; }
.nav a { display: flex; align-items: center; gap: 12px; padding: 8px 12px; border-radius: 8px; color: #4b5563; }
.nav svg { margin-top: 8px; }
.nav b, .nav small { display: block; }
.nav small { font-size: 12px; line-height: 16px; color: #7b828e; }
.nav .active { color: #fff; background: linear-gradient(90deg, #e4002b, #dc2626); box-shadow: 0 2px 6px rgba(0, 0, 0, .14); }
.nav .active small { color: #fbb4c0; }
.status { margin: 0 16px 16px; padding: 16px; border-radius: 12px; background: #f9fafb; font-size: 12px; line-height: 16px; color: #374151; }
.status h3, .about h3 { font-size: 12px; line-height: 16px; margin-bottom: 12px; color: #4b5563; }
.status ul { display: grid; gap: 8px; }
.status li { display: flex; align-items: center; gap: 8px; }
.about { margin: 0 16px 16px; padding: 16px; border-radius: 12px; font-size: 12px; line-height: 16px; color: #fbc4cd; background: linear-gradient(135deg, #e4002b, #c0001d); }
.about h3 { color: #fde0e4; }
.about h4 { display: flex; align-items: center; gap: 4px; font-size: 14px; line-height: 20px; font-weight: 600; color: #fff; margin-bottom: 4px; white-space: nowrap; }
.about p { line-height: 20px; margin-bottom: 10px; }
.credits { display: grid; gap: 4px; padding-top: 12px; border-top: 1px solid rgba(255, 255, 255, .15); }
.credits span { display: flex; align-items: center; gap: 5px; }
.credits svg { opacity: .85; }
.credits .strong { color: #fff; font-weight: 500; margin-bottom: 4px; }
.user { display: flex; align-items: center; gap: 12px; padding: 16px; border-top: 1px solid #ececee; }
.avatar { position: relative; display: grid; place-items: end center; width: 40px; height: 40px; padding-bottom: 5px; border-radius: 12px; background: linear-gradient(135deg, #e4002b, #dc2626); }
.avatar::after { content: ""; position: absolute; right: -3px; bottom: -3px; width: 14px; height: 14px; border: 1px solid #fff; border-radius: 50%; background: #22c55e; }
.user-text { flex: 1; }
.user-text b { display: block; margin-bottom: 4px; }
.user-text span { display: inline-block; padding: 4px 8px; border-radius: 12px; font-size: 12px; line-height: 16px; color: #991b1b; background: #fee2e2; }
.user button { padding: 0 4px; }

/* Main column */
.main { flex: 1; min-width: 0; padding: 24px; }
.welcome { display: flex; justify-content: space-between; align-items: center; margin-bottom: 32px; }
.welcome h1 { font-size: 24px; line-height: 34px; font-weight: 400; margin-bottom: 6px; }
.lead { display: flex; align-items: center; gap: 4px; margin-bottom: 4px; font-size: 16px; line-height: 26px; color: #4b5563; }
.date { color: #6b7280; }
.live, .ok { display: flex; align-items: center; }
.live { gap: 12px; }
.ok { gap: 8px; color: #4b5563; }
.badge { display: flex; align-items: center; gap: 2px; padding: 2px 10px; border-radius: 20px; font-size: 12px; line-height: 16px; font-weight: 500; color: #fff; background: linear-gradient(90deg, #1e3a8a, #0ea5e9); }

.hero { display: flex; justify-content: space-between; align-items: center; margin-bottom: 32px; padding: 25px; border-radius: 16px; color: #fff; background: radial-gradient(circle at 880px 104px, rgba(255, 199, 44, .18), rgba(255, 199, 44, 0) 150px), linear-gradient(135deg, #e4002b, #c0001d); box-shadow: 0 18px 28px rgba(0, 0, 0, .13); }
.hero-top { display: flex; align-items: center; gap: 12px; margin-bottom: 12px; }
.hero-icon { display: grid; place-items: center; width: 40px; height: 40px; border-radius: 12px; background: rgba(255, 255, 255, .2); border: 1px solid rgba(255, 255, 255, .2); }
.hero-label { font-size: 12px; line-height: 17px; color: rgba(255, 255, 255, .9); }
.hero h2 { font-size: 24px; line-height: 34px; font-weight: 600; }
.hero-code { font-size: 36px; line-height: 43px; font-weight: 600; margin-bottom: 8px; }
.hero-dates { font-size: 16px; line-height: 26px; color: rgba(255, 255, 255, .9); }
.hero-right { text-align: right; }
.hero-right p { margin-bottom: 8px; color: rgba(255, 255, 255, .9); }
.count { min-width: 182px; padding: 24px 32px; border-radius: 24px; border: 1px solid rgba(255, 255, 255, .25); background: rgba(255, 255, 255, .12); }
.count strong { display: block; margin-bottom: 4px; font-size: 60px; line-height: 60px; font-weight: 900; }
.count span { display: block; font-size: 12px; line-height: 16px; color: rgba(255, 255, 255, .8); }

.block { margin-bottom: 32px; }
.head { display: flex; justify-content: space-between; align-items: center; margin-bottom: 24px; }
.head h2 { font-size: 24px; line-height: 34px; font-weight: 600; margin-bottom: 4px; }
.head p { font-size: 16px; line-height: 25px; color: #4b5563; }
.note { display: flex; align-items: center; color: #6b7280; }
.roster-head { margin-bottom: 16px; }
.quick-head h2 { font-size: 20px; line-height: 28px; font-weight: 400; }
.analytics-head h2 { margin-bottom: 0; }
.head-side { display: flex; align-items: center; gap: 12px; }

/* Roster strip */
.roster-wrap { position: relative; overflow: hidden; margin-bottom: 16px; }
.roster-wrap::before, .roster-wrap::after { content: ""; position: absolute; z-index: 2; top: 0; bottom: 0; width: 32px; }
.roster-wrap::before { left: 0; background: linear-gradient(90deg, #fff, rgba(255, 255, 255, 0)); }
.roster-wrap::after { right: 0; background: linear-gradient(270deg, #fff, rgba(255, 255, 255, 0)); }
.roster { display: flex; gap: 16px; padding-bottom: 16px; }
.rp { flex: none; width: 192px; padding: 16px; border: 2px solid #e5e7eb; border-radius: 12px; background: #fff; font-size: 12px; line-height: 16px; }
.rp.current { border-color: #e4002b; background: linear-gradient(135deg, #fae0e5, #f4c4cd); box-shadow: 0 8px 14px rgba(0, 0, 0, .12); }
.rp.plan { border-color: #bfdbfe; background: linear-gradient(135deg, #eff6ff, #dbeafe); }
.rp.featured { border-color: #93c5fd; transform: scale(1.05); box-shadow: 0 8px 14px rgba(0, 0, 0, .12); }
.rp-top { display: flex; align-items: center; justify-content: space-between; margin-bottom: 12px; }
.code { padding: 4px 8px; border-radius: 14px; font-size: 14px; line-height: 20px; font-weight: 600; color: #fff; background: #6b7280; }
.plan .code { background: #3b82f6; }
.current .code { background: #e4002b; }
.tag { padding: 4px 8px; border-radius: 12px; font-weight: 700; color: #e4002b; background: #ffc72c; }
.dur { margin-bottom: 4px; color: #6b7280; }
.range { margin-bottom: 8px; font-size: 14px; line-height: 20px; font-weight: 500; color: #1f2937; }
.left { display: flex; align-items: center; margin-bottom: 8px; color: #4b5563; }
.left.red { color: #e4002b; }
.left.blue { color: #2563eb; }
.day { text-align: center; color: #6b7280; }
.bar { height: 8px; border-radius: 4px; overflow: hidden; background: #e5e7eb; }
.bar i { display: block; height: 100%; border-radius: 4px; background: #e4002b; }
.bar.amber i { background: #f59e0b; }
.bar.blue i { background: #3b82f6; }
.bar.thin { margin: 12px 0 4px; background: rgba(255, 255, 255, .6); }
.bar.thin i { border-radius: 4px 0 0 4px; }
.hint { display: flex; align-items: center; justify-content: center; font-size: 12px; line-height: 16px; color: #6b7280; }

/* Metric cards */
.stats { display: grid; gap: 24px; margin-bottom: 32px; }
.five { grid-template-columns: repeat(5, minmax(0, 1fr)); }
.three { grid-template-columns: repeat(3, minmax(0, 1fr)); }
.stat { position: relative; overflow: hidden; padding: 24px; border: 2px solid; border-radius: 12px; color: #374151; box-shadow: 0 3px 6px rgba(0, 0, 0, .12); }
.stat.blue { border-color: #bfdbfe; background: linear-gradient(135deg, #ebf3fe, #d1ddfb); }
.stat.green { border-color: #bbf7d0; background: linear-gradient(135deg, #e7f9ee, #cfebda); }
.stat.yellow { border-color: #fde68a; background: linear-gradient(135deg, #fef4e3, #f5e2cb); }
.stat.red { border-color: #fecaca; background: linear-gradient(135deg, #fdecec, #f6d1cf); }
.stat.purple { border-color: #e9d5ff; background: linear-gradient(135deg, #f6eeff, #e7d5fb); }
.stat.indigo { border-color: #c7d2fe; background: linear-gradient(135deg, #efeffe, #d9d8fa); }
.mark { position: absolute; top: -4px; right: -8px; width: 88px; height: 88px; opacity: .08; transform: rotate(12deg); }
.stat-top { position: relative; display: flex; align-items: flex-start; }
.stat-text { flex: 1; }
.stat h3 { margin-bottom: 4px; padding-right: 6px; font-size: 12px; line-height: 17px; }
.stat strong { display: block; margin-bottom: 4px; font-size: 36px; line-height: 43px; font-weight: 600; color: #111827; }
.stat p { line-height: 21px; }
.stat .next { margin: 4px 0; }
.split { padding-top: 4px; border-top: 1px solid #d1d5db; }
.stat-icon { display: flex; align-items: center; justify-content: center; width: 56px; height: 56px; border-radius: 16px; box-shadow: inset 0 0 0 1px #fff, 0 8px 12px rgba(0, 0, 0, .1); }
.blue .stat-icon, .action.blue .tile { background: linear-gradient(135deg, #3b82f6, #2563eb); }
.green .stat-icon, .action.green .tile { background: linear-gradient(135deg, #22c55e, #16a34a); }
.yellow .stat-icon, .action.yellow .tile { background: linear-gradient(135deg, #f59e0b, #d97706); }
.red .stat-icon { background: linear-gradient(135deg, #ef4444, #dc2626); }
.purple .stat-icon, .action.purple .tile { background: linear-gradient(135deg, #a855f7, #9333ea); }
.indigo .stat-icon { background: linear-gradient(135deg, #6366f1, #4f46e5); }
.trend { display: flex; align-items: center; gap: 8px; margin-top: 16px; font-size: 12px; line-height: 16px; color: #4b5563; }
.pill { display: flex; align-items: center; flex: none; padding: 6px 12px; border: 1px solid; border-radius: 15px; font-weight: 600; }
.pill.up { color: #166534; border-color: #86efac; background: rgba(34, 197, 94, .2); }
.pill.down { color: #991b1b; border-color: #fca5a5; background: rgba(239, 68, 68, .2); }

/* Cards */
.card { border: 1px solid #e5e7eb; border-radius: 12px; background: #fff; padding: 24px; box-shadow: 0 1px 3px rgba(0, 0, 0, .1); }
.quick { display: grid; grid-template-columns: repeat(4, minmax(0, 1fr)); gap: 16px; }
.action { overflow: hidden; }
.action .row { display: flex; align-items: center; }
.tile { display: flex; align-items: center; justify-content: center; width: 56px; height: 56px; margin-right: 16px; border-radius: 16px; box-shadow: 0 8px 12px rgba(0, 0, 0, .1); }
.action-text { flex: 1; }
.action-title { display: flex; align-items: center; gap: 8px; margin-bottom: 4px; }
.action-title b { font-size: 20px; line-height: 28px; font-weight: 600; }
.desc { display: block; line-height: 21px; color: #4b5563; }
.btn { display: flex; align-items: center; gap: 4px; padding: 8px 16px; border-radius: 6px; font-weight: 500; color: #fff; background: #e4002b; white-space: nowrap; }
.btn.large { flex: none; gap: 6px; padding: 13px 24px; border-radius: 8px; box-shadow: 0 1px 3px rgba(0, 0, 0, .15); }

.analytics { display: grid; grid-template-columns: repeat(3, minmax(0, 1fr)); gap: 24px; margin-bottom: 24px; }
.panel { box-shadow: 0 8px 14px rgba(0, 0, 0, .1); }
.panel-head { display: flex; justify-content: space-between; align-items: center; height: 32px; margin-bottom: 16px; }
.panel-head h3 { font-size: 18px; line-height: 28px; font-weight: 600; }
.legend { display: grid; gap: 12px; color: #4b5563; }
.legend li { display: flex; align-items: center; gap: 12px; }
.legend b, .meters b { margin-left: auto; font-weight: 500; color: #111827; }
.foot { margin-top: 16px; padding-top: 16px; border-top: 1px solid #e5e7eb; }
.rate { display: flex; justify-content: space-between; line-height: 28px; margin-bottom: 8px; font-weight: 500; color: #1f2937; }
.rate b { font-size: 18px; font-weight: 700; color: #d97706; }
.total { text-align: center; color: #4b5563; }
.total b { display: block; font-size: 24px; line-height: 32px; font-weight: 700; color: #e4002b; }
.meters { display: grid; gap: 16px; color: #4b5563; }
.meters p { display: flex; margin-bottom: 8px; }

.promo { display: flex; align-items: center; justify-content: space-between; gap: 24px; padding: 24px; border: 1px solid #f9b6c2; border-radius: 12px; background: linear-gradient(90deg, #f8dfe4, #fbf5e4); }
.promo h3 { display: flex; align-items: center; margin-bottom: 8px; font-size: 18px; line-height: 28px; font-weight: 600; }
.promo p { margin-bottom: 12px; font-size: 16px; line-height: 25px; color: #374151; }
.chips { display: flex; gap: 8px; }
.chips span { display: flex; align-items: center; padding: 4px 12px; border: 1px solid #e5e7eb; border-radius: 13px; font-size: 12px; line-height: 16px; font-weight: 500; color: #374151; background: #fff; }

/* Health and activity */
.bottom { display: grid; grid-template-columns: repeat(2, minmax(0, 1fr)); gap: 24px; }
.health { border-color: #bfdbfe; background: linear-gradient(135deg, #eff6ff, #eef2ff); box-shadow: 0 3px 6px rgba(0, 0, 0, .1); }
.sec-head { display: flex; justify-content: space-between; align-items: center; margin-bottom: 24px; }
.sec-head h3 { margin-bottom: 4px; font-size: 20px; line-height: 28px; font-weight: 600; }
.sec-head p { line-height: 21px; color: #4b5563; }
.sec-icon { display: grid; place-items: center; width: 48px; height: 48px; border-radius: 16px; }
.sec-icon.green { background: #dcfce7; }
.sec-icon.blue { background: #dbeafe; }
.checks, .events { display: grid; gap: 16px; }
.checks li { display: flex; align-items: center; gap: 12px; padding: 12px; border-radius: 12px; background: rgba(255, 255, 255, .6); }
.checks div { flex: 1; }
.checks b { display: block; font-size: 16px; line-height: 26px; }
.checks small { display: block; font-size: 12px; line-height: 16px; color: #4b5563; }
.state { padding: 4px 8px; border-radius: 12px; font-size: 12px; line-height: 16px; font-weight: 500; color: #15803d; background: #dcfce7; }
.state.dev { color: #b45309; background: #fef3c7; }
.events li { display: flex; gap: 12px; padding: 12px; border: 1px solid; border-radius: 12px; font-size: 12px; line-height: 16px; }
.events .dot { margin-top: 8px; }
.events b { display: block; font-size: 14px; line-height: 20px; margin-bottom: 4px; }
.events p { margin-bottom: 4px; }
.events time { display: block; }
.events .warn { background: #fffbeb; border-color: #fde68a; color: #b45309; }
.warn b { color: #78350f; }
.warn time { color: #d97706; }
.events .info { background: #eff6ff; border-color: #bfdbfe; color: #1d4ed8; }
.info b { color: #1e3a8a; }
.info time { color: #2563eb; }
.events .good { background: #f0fdf4; border-color: #bbf7d0; color: #15803d; }
.good b { color: #14532d; }
.good time { color: #16a34a; }
.more { display: flex; justify-content: center; margin-top: 16px; padding-top: 16px; border-top: 1px solid #e5e7eb; }
.more button { display: flex; align-items: center; gap: 4px; padding: 9px 12px; font-weight: 500; color: #4b5563; }
```
